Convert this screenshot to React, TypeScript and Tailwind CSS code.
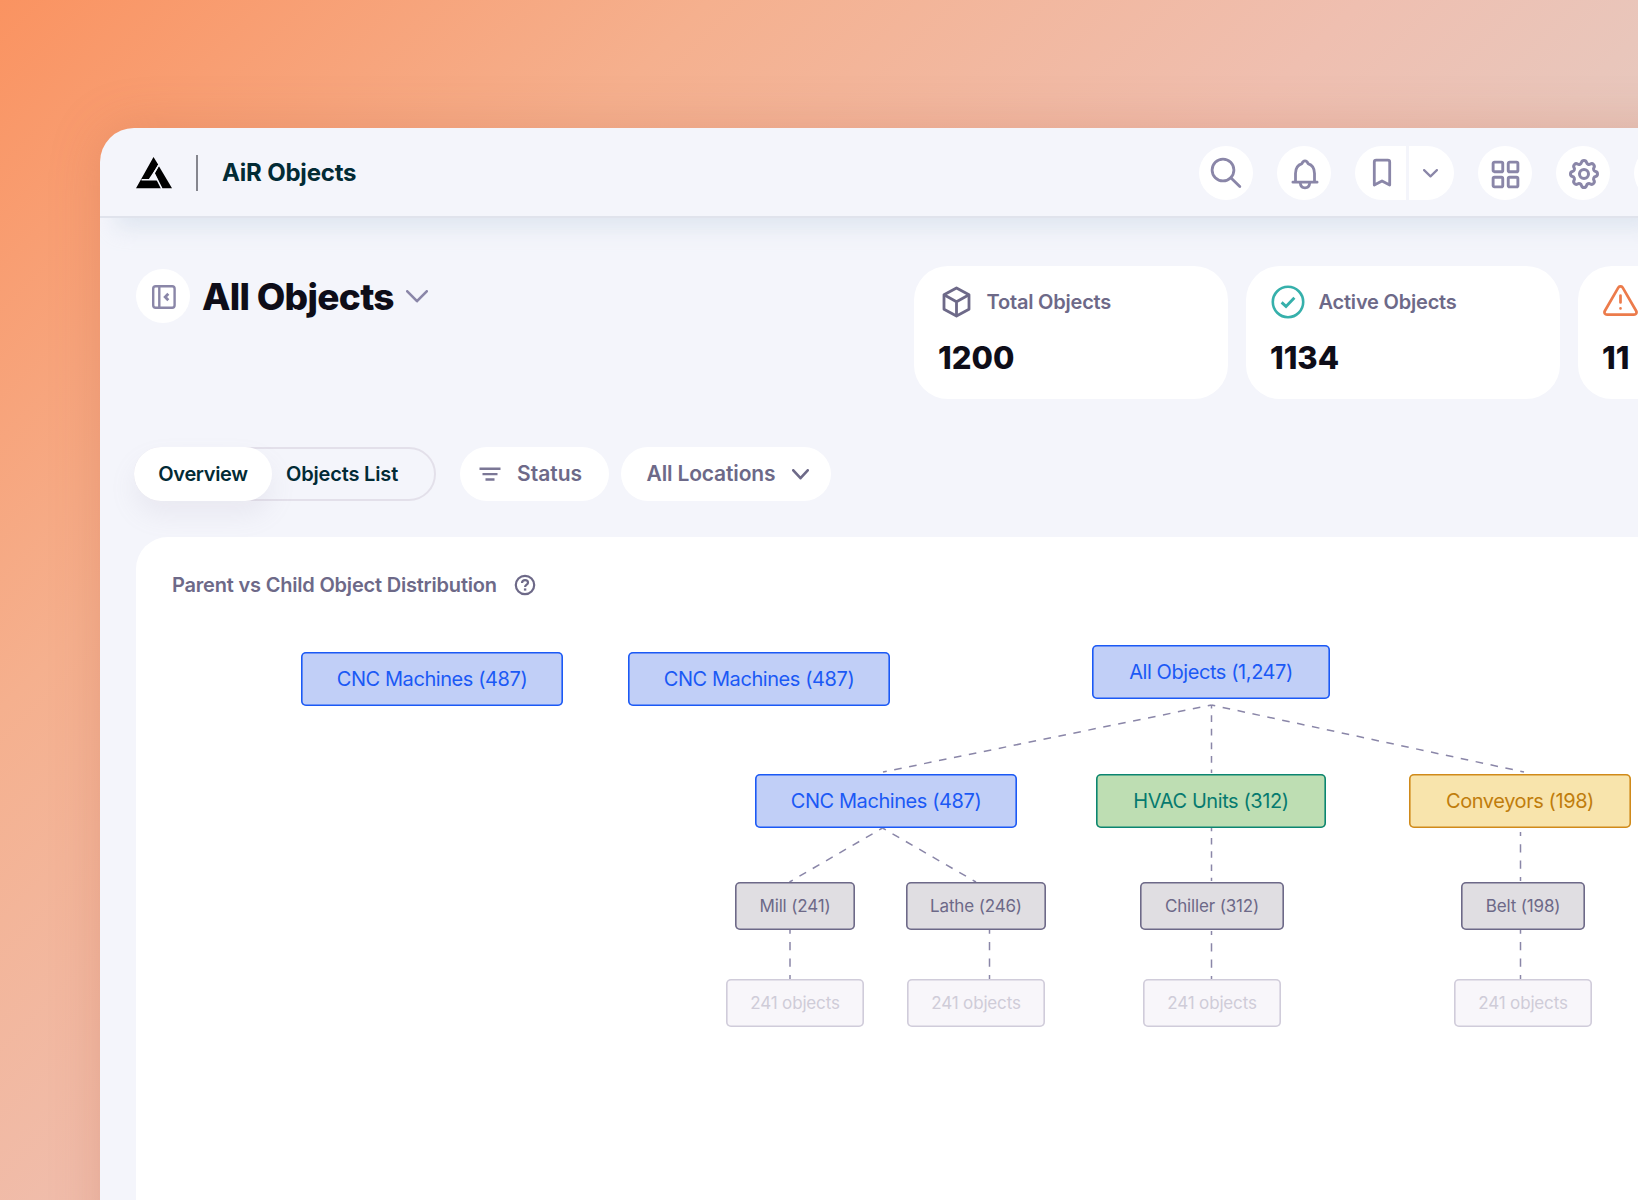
import { LayoutGrid } from "lucide-react";
import { TbSettings } from "react-icons/tb";

// type
type NodeItem = {
  label: string;
  x: number;
  y: number;
  w: number;
  kind: "blue" | "green" | "yellow" | "gray" | "muted";
};

type Line = {
  from: [number, number];
  to: [number, number];
  dashes: number;
};

const kinds = {
  blue: "h-[54px] text-[20px] tracking-[-0.42px] inset-ring-[#1b59f5] bg-[#c1cff7] text-[#1b59f5]",
  green: "h-[54px] text-[20px] tracking-[-0.42px] inset-ring-[#0b8570] bg-[#bedeb3] text-[#067a6f]",
  yellow: "h-[54px] text-[20px] tracking-[-0.42px] inset-ring-[#d08a1a] bg-[#f8e4ac] text-[#c07d0c]",
  gray: "h-[48px] pt-px text-[17px] tracking-[-0.15px] inset-ring-[#6d6988] bg-[#e0dee2] text-[#6d6988]",
  muted: "h-[48px] pt-px text-[17px] tracking-[-0.15px] inset-ring-[#d0ccda] bg-[#f8f6fa] text-[#cfccd8]",
};

// Positions are relative to the canvas
const nodes: NodeItem[] = [
  { label: "CNC Machines (487)", x: 165, y: 115, w: 262, kind: "blue" },
  { label: "CNC Machines (487)", x: 492, y: 115, w: 262, kind: "blue" },
  { label: "All Objects (1,247)", x: 956, y: 108, w: 238, kind: "blue" },
  { label: "CNC Machines (487)", x: 619, y: 237, w: 262, kind: "blue" },
  { label: "HVAC Units (312)", x: 960, y: 237, w: 230, kind: "green" },
  { label: "Conveyors (198)", x: 1273, y: 237, w: 222, kind: "yellow" },
  { label: "Mill (241)", x: 599, y: 345, w: 120, kind: "gray" },
  { label: "Lathe (246)", x: 770, y: 345, w: 140, kind: "gray" },
  { label: "Chiller (312)", x: 1004, y: 345, w: 144, kind: "gray" },
  { label: "Belt (198)", x: 1325, y: 345, w: 124, kind: "gray" },
  { label: "241 objects", x: 590, y: 442, w: 138, kind: "muted" },
  { label: "241 objects", x: 771, y: 442, w: 138, kind: "muted" },
  { label: "241 objects", x: 1007, y: 442, w: 138, kind: "muted" },
  { label: "241 objects", x: 1318, y: 442, w: 138, kind: "muted" },
];

const lines: Line[] = [
  { from: [1075.5, 168], to: [747, 235], dashes: 22 },
  { from: [1075.5, 168], to: [1075.5, 236], dashes: 5 },
  { from: [1075.5, 168], to: [1388, 235], dashes: 21 },
  { from: [746.5, 291], to: [653.5, 345], dashes: 7 },
  { from: [746.5, 291], to: [840, 345], dashes: 7 },
  { from: [1075.5, 291], to: [1075.5, 344], dashes: 4 },
  { from: [1384.5, 295], to: [1384.5, 344], dashes: 3 },
  { from: [654, 392.5], to: [654, 442], dashes: 3 },
  { from: [853.5, 392.5], to: [853.5, 442], dashes: 3 },
  { from: [1075.5, 394], to: [1075.5, 443], dashes: 3 },
  { from: [1384.5, 392.5], to: [1384.5, 442], dashes: 3 },
];

// Icons
const Logo = () => (
  <svg width="36" height="32" viewBox="0 0 36 32" fill="#000">
    <path d="M17.5 0L22.3 7.8L12.7 22.2H23.4L26.2 31.3H0L5.5 21.6Z" />
    <path d="M5.5 22.8H24" stroke="#f4f5fb" strokeWidth="1.6" />
    <path d="M22.8 9L36 31.3H26L18.6 16.6Z" />
    <path d="M23.2 7.2L18 16.2L26 32" stroke="#f4f5fb" strokeWidth="1.6" fill="none" />
  </svg>
);

const SearchIcon = () => (
  <svg width="32" height="32" viewBox="0 0 32 32" fill="none" stroke="currentColor" strokeWidth="2.8" strokeLinecap="round">
    <circle cx="13" cy="13" r="10.9" />
    <path d="M20.8 20.8L29.8 29.6" />
  </svg>
);

const BellIcon = () => (
  <svg width="30" height="32" viewBox="0 0 30 32" fill="none" stroke="currentColor" strokeWidth="2.8" strokeLinecap="round" strokeLinejoin="round">
    <path d="M2.9 24.2H27.1M5.5 24V15.5C5.5 10.5 8 6.8 12 5.6C12.6 3.7 13.6 2.9 15 2.9C16.4 2.9 17.4 3.7 18 5.6C22 6.8 24.5 10.5 24.5 15.5V24" />
    <path d="M10.2 24.6C10.5 27.8 12.3 29.8 15 29.8C17.7 29.8 19.5 27.8 19.8 24.6" />
  </svg>
);

const BookmarkIcon = () => (
  <svg width="20" height="30" viewBox="0 0 20 30" fill="none" stroke="currentColor" strokeWidth="2.8">
    <path d="M2.3 27V4C2.3 2.8 3 2.1 4.2 2.1H15.8C17 2.1 17.7 2.8 17.7 4V27L10 22.9Z" strokeLinejoin="round" />
  </svg>
);

const Chevron = ({ width, height, stroke }: { width: number; height: number; stroke: number }) => (
  <svg width={width} height={height} fill="none" stroke="currentColor" strokeWidth={stroke} strokeLinecap="round" strokeLinejoin="round">
    <path d={`M${stroke / 2} ${stroke / 2}L${width / 2} ${height - stroke / 2 - 0.5}L${width - stroke / 2} ${stroke / 2}`} />
  </svg>
);

const PanelIcon = () => (
  <svg width="24" height="24" viewBox="0 0 24 24" fill="none" stroke="currentColor" strokeWidth="2.4">
    <rect x="1.2" y="1.2" width="21.4" height="21.6" rx="2.5" />
    <path d="M7.3 1.5V22.5" />
    <path d="M16.3 8.8L13.2 12L16.3 15.2" strokeWidth="2.8" />
  </svg>
);

const BoxIcon = () => (
  <svg width="29" height="32" viewBox="0 0 29 32" fill="none" stroke="#6d6988" strokeWidth="2.8" strokeLinejoin="round">
    <path d="M14.5 2L27 8.8V23.2L14.5 30L2 23.2V8.8Z" />
    <path d="M2 8.8L14.5 15.8L27 8.8M14.5 15.8V30" />
  </svg>
);

const CheckIcon = () => (
  <svg width="34" height="34" viewBox="0 0 34 34" fill="none" stroke="#36b0ab" strokeWidth="2.6">
    <circle cx="17" cy="17" r="15.2" />
    <path d="M10.6 17.4L15 21.4L23.4 12.8" strokeWidth="2.9" />
  </svg>
);

const AlertIcon = () => (
  <svg className="-mt-[3px]" width="35" height="31" viewBox="0 0 35 31" fill="none" stroke="#ec7b4b" strokeWidth="2.7" strokeLinecap="round" strokeLinejoin="round">
    <path d="M15.3 2.6C16.3 0.9 18.7 0.9 19.7 2.6L33.2 26C34.1 27.7 33 29.6 31 29.6H4C2 29.6 0.9 27.7 1.8 26Z" />
    <path d="M17.5 10.5V17.5M17.5 23.4V23.5" />
  </svg>
);

const HelpIcon = () => (
  <svg width="22" height="22" viewBox="0 0 22 22" fill="none" stroke="#6d6988" strokeWidth="2.2">
    <circle cx="11" cy="11" r="9.2" />
    <path d="M8 8.9C8 7.2 9.3 6.2 11 6.2C12.8 6.2 14 7.2 14 8.7C14 10.6 11.1 10.7 11.1 13" />
    <path d="M11.1 14.4V16.6" strokeWidth="2.4" />
  </svg>
);

const FilterIcon = () => (
  <svg width="22" height="16" viewBox="0 0 22 16" stroke="#7b7796" strokeWidth="2.4">
    <path d="M0.5 2.7H21.5M3.5 8.1H18.5M6.5 13.5H15.5" />
  </svg>
);

const stats = [
  { label: "Total Objects", value: "1200", icon: <BoxIcon /> },
  { label: "Active Objects", value: "1134", icon: <CheckIcon /> },
  { label: "", value: "11", icon: <AlertIcon /> },
];

function Header() {
  return (
    <header className="relative flex h-[89.5px] shrink-0 items-center border-b-2 border-[#e0e3ec] pt-[3px] pl-[36.5px] shadow-[16px_10px_20px_rgba(196,210,226,0.42)]">
      <Logo />
      <div className="ml-6 h-9 w-0.5 bg-[#85868e]" />
      <span className="ml-6 text-[24px] font-bold tracking-[-0.2px] text-[#022b35]">AiR Objects</span>

      <div className="ml-auto flex w-[439px] shrink-0 gap-6 text-[#8a86a8]">
        <button className="flex size-[54px] shrink-0 items-center justify-center rounded-full bg-white">
          <SearchIcon />
        </button>
        <button className="flex size-[54px] shrink-0 items-center justify-center rounded-full bg-white pl-[2px] pt-px">
          <BellIcon />
        </button>
        <div className="flex h-[54px] shrink-0 gap-[3px]">
          <button className="flex w-[51px] items-center justify-center rounded-l-full bg-white pl-0.5">
            <BookmarkIcon />
          </button>
          <button className="flex w-[45px] items-center justify-center rounded-r-full bg-white pr-[3px]">
            <Chevron width={15} height={9} stroke={2.2} />
          </button>
        </div>
        <button className="flex size-[54px] shrink-0 items-center justify-center rounded-full bg-white pt-0.5 pl-px">
          <LayoutGrid size={33} strokeWidth={2.1} />
        </button>
        <button className="flex size-[54px] shrink-0 items-center justify-center rounded-full bg-white pt-0.5 pl-0.5">
          <TbSettings size={36} className="[stroke-width:2]" />
        </button>
        <button className="size-[54px] shrink-0 rounded-full bg-white" />
      </div>
    </header>
  );
}

function App() {
  return (
    <div className="h-[1200px] w-[1638px] overflow-hidden bg-[linear-gradient(135deg,#fa9361_0%,#f5b08e_25%,#efbfb0_48%,#e3cdc6_70%)] pl-[99.5px] pt-32 font-[Inter,sans-serif]">
      <div className="flex h-[1200px] w-[1700px] flex-col overflow-hidden rounded-tl-[34px] bg-[#f4f5fb] shadow-[0_0_50px_rgba(190,90,60,0.25)]">
        <div className="flex w-[1538.5px] flex-col">
          <Header />

          {/* Title + stats */}
          <div className="flex justify-between pt-[48.5px] pl-[36.5px]">
            <div className="flex h-[54px] items-center pt-1.5">
              <button className="flex size-[54px] items-center justify-center rounded-full bg-white pt-0.5 pl-0.5 text-[#8a86a8]">
                <PanelIcon />
              </button>
              <h1 className="ml-3 pt-px text-[37px] font-extrabold tracking-[-0.7px] text-[#0e0d18]">All Objects</h1>
              <span className="ml-3 text-[#8a86a8]">
                <Chevron width={22} height={13} stroke={2.6} />
              </span>
            </div>

            <div className="flex w-[724px] gap-[18px] overflow-hidden">
              {stats.map((item) => (
                <div key={item.value} className="h-[133px] w-[314px] shrink-0 rounded-[34px] bg-white pl-6">
                  <div className="flex h-[72px] items-center">
                    <div className="flex w-9 justify-center">{item.icon}</div>
                    <span className="ml-[12.5px] text-[20px] font-semibold tracking-[-0.2px] text-[#6d6988]">{item.label}</span>
                  </div>
                  <div className="mt-0.5 text-[31px] leading-9 font-extrabold text-[#0e0d18]">{item.value}</div>
                </div>
              ))}
            </div>
          </div>

          {/* Tabs + filters */}
          <div className="mt-12 flex h-[54px] pl-[34.5px]">
            <div className="flex w-[302px] rounded-full border-2 border-[#e3e0ea]">
              <button className="-m-0.5 w-[138px] rounded-full bg-white text-[20px] font-semibold tracking-[-0.35px] text-[#022b35] shadow-[0_14px_26px_rgba(160,145,175,0.12)]">
                Overview
              </button>
              <button className="ml-4 text-[20px] font-semibold tracking-[-0.17px] text-[#022b35]">Objects List</button>
            </div>
            <button className="ml-6 flex w-[148.5px] items-center gap-4 rounded-full bg-white pl-[19px] text-[21px] font-semibold text-[#6d6988]">
              <FilterIcon />
              Status
            </button>
            <button className="ml-3 flex w-[210px] items-center gap-[17px] rounded-full bg-white pl-[26px] text-[21px] font-semibold tracking-[-0.15px] text-[#6d6988]">
              All Locations
              <Chevron width={17} height={11} stroke={2.6} />
            </button>
          </div>

          {/* Diagram */}
          <div className="relative mt-9 ml-[36.5px] h-[700px] rounded-tl-[32px] bg-white">
            <div className="flex items-center gap-[17px] pt-[33px] pl-9">
              <h2 className="text-[20px] font-semibold tracking-[-0.2px] text-[#6d6988]">Parent vs Child Object Distribution</h2>
              <HelpIcon />
            </div>

            <svg className="absolute top-0 left-0" width="1502" height="640" stroke="#8a86a8" strokeWidth="1.5">
              {lines.map((line, index) => {
                const [x1, y1] = line.from;
                const [x2, y2] = line.to;
                const dash = Math.hypot(x2 - x1, y2 - y1) / line.dashes / 2;
                return (
                  <line key={index} x1={x1} y1={y1} x2={x2} y2={y2} strokeDasharray={dash} strokeDashoffset={dash / 2} />
                );
              })}
            </svg>

            {nodes.map((node, index) => (
              <div
                key={index}
                className={`absolute flex items-center justify-center rounded-[5px] inset-ring-[1.6px] font-[370] whitespace-nowrap ${kinds[node.kind]}`}
                style={{ left: node.x, top: node.y, width: node.w }}
              >
                {node.label}
              </div>
            ))}
          </div>
        </div>
      </div>
    </div>
  );
}

export default App;
